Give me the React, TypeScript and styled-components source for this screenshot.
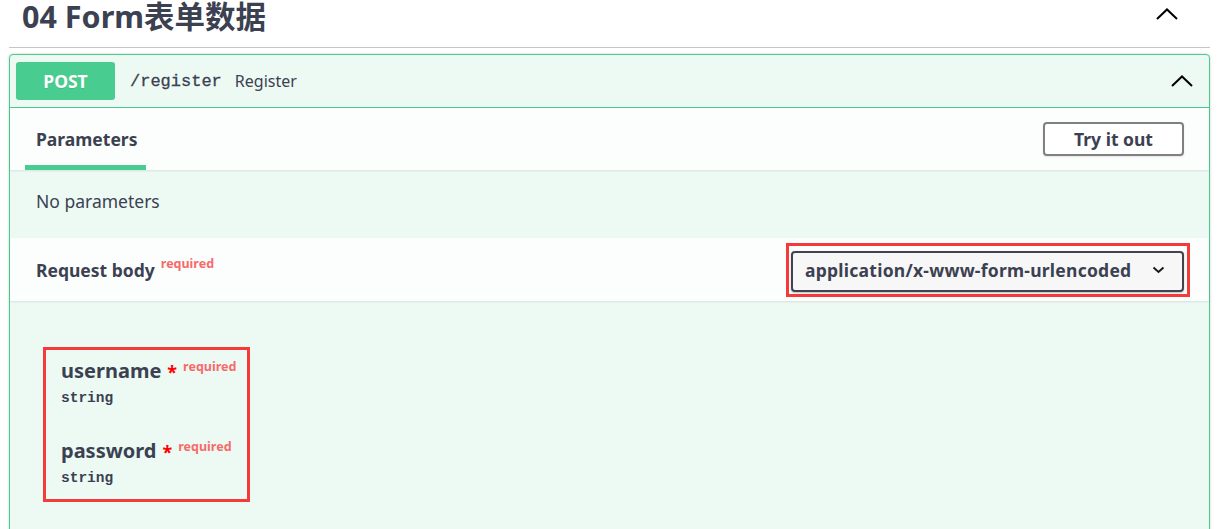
import React from "react";
import styled, { createGlobalStyle } from "styled-components";

const GlobalStyle = createGlobalStyle`
  html, body { margin: 0; padding: 0; background: #ffffff; }
  body {
    font-family: "Noto Sans", "Noto Sans CJK SC", sans-serif;
    color: #3b4151;
    overflow: hidden;
  }
`;

const Page = styled.div`
  padding: 0 10px 0 9px;
`;

const TagHeader = styled.div`
  display: flex;
  align-items: flex-start;
  justify-content: space-between;
  padding: 0 32px 15px 13px;
  border-bottom: 1px solid #c4c6cb;
`;

const TagTitle = styled.h4`
  margin: 0;
  font-size: 30.5px;
  line-height: 32px;
  font-weight: 700;
  color: #3b4151;
`;

const ChevronButton = styled.button<{ $top?: number }>`
  border: none;
  background: transparent;
  padding: 0;
  margin-top: ${(p) => p.$top ?? 0}px;
  display: flex;
  align-items: center;
  cursor: pointer;
`;

const Opblock = styled.div`
  margin-top: 6px;
  border: 1px solid #49cc90;
  border-radius: 4px;
  background: #edfaf4;
  box-shadow: 0 0 3px rgba(0, 0, 0, 0.19);
`;

const Summary = styled.div`
  display: flex;
  align-items: center;
  padding: 7px 16px 7px 6px;
  border-bottom: 1px solid #49cc90;
`;

const MethodBadge = styled.span`
  width: 99px;
  height: 38px;
  border-radius: 3px;
  background: #49cc90;
  color: #ffffff;
  font-weight: 700;
  font-size: 17.5px;
  display: flex;
  align-items: center;
  justify-content: center;
  text-shadow: 0 1px 0 rgba(0, 0, 0, 0.1);
`;

const Path = styled.span`
  margin-left: 15px;
  font-family: "Liberation Mono", monospace;
  font-size: 17px;
  color: #3b4151;
  -webkit-text-stroke: 0.3px #3b4151;
`;

const Description = styled.span`
  margin-left: 13px;
  font-size: 16px;
  color: #3b4151;
  flex: 1;
`;

const SectionHeader = styled.div<{ $height: number; $right: number }>`
  display: flex;
  align-items: center;
  justify-content: space-between;
  height: ${(p) => p.$height}px;
  padding: 0 ${(p) => p.$right}px 0 15px;
  background: #fbfefd;
  box-shadow: 0 1px 2px rgba(0, 0, 0, 0.1);
  position: relative;
`;

const Tab = styled.div`
  align-self: stretch;
  display: flex;
  align-items: center;
  padding: 0 9px 0 11px;
  font-size: 17.5px;
  font-weight: 700;
  box-shadow: inset 0 -5px 0 #49cc90;
`;

const TryButton = styled.button`
  width: 141px;
  height: 34px;
  border: 2px solid #808080;
  border-radius: 4px;
  background: #ffffff;
  color: #3b4151;
  font-family: inherit;
  font-size: 17.5px;
  font-weight: 700;
  box-shadow: 0 1px 2px rgba(0, 0, 0, 0.1);
  cursor: pointer;
`;

const NoParams = styled.div`
  height: 68px;
  box-sizing: border-box;
  display: flex;
  align-items: center;
  padding: 0 0 6px 26px;
  font-size: 17.5px;
`;

const BodyTitle = styled.div`
  padding-left: 11px;
  font-size: 17.5px;
  font-weight: 700;
  display: flex;
  align-items: flex-start;
`;

const RequiredSup = styled.span<{ $top: number }>`
  font-size: 12.5px;
  font-weight: 700;
  color: #f76a6a;
  margin-left: 6px;
  position: relative;
  top: ${(p) => p.$top}px;
`;

const Annotation = styled.div<{ $pad: string }>`
  border: 3px solid #f53a3a;
  padding: ${(p) => p.$pad};
`;

const SelectBox = styled.div`
  width: 393px;
  height: 41px;
  box-sizing: border-box;
  border: 2px solid #41444e;
  border-radius: 4px;
  background: #f7f7f7;
  box-shadow: 0 1px 2px rgba(0, 0, 0, 0.25);
  display: flex;
  align-items: center;
  justify-content: space-between;
  padding: 0 17px 3px 12px;
  font-size: 17.5px;
  letter-spacing: 0.25px;
  font-weight: 700;
  color: #3b4151;
`;

const BodyContent = styled.div`
  padding: 46px 0 40px 33px;
`;

const ParamBox = styled(Annotation)`
  width: 207px;
  box-sizing: border-box;
`;

const Param = styled.div<{ $gap: number }>`
  margin-top: ${(p) => p.$gap}px;
`;

const ParamName = styled.div`
  display: flex;
  align-items: flex-start;
  font-size: 20px;
  line-height: 24px;
  font-weight: 700;
`;

const Asterisk = styled.span`
  color: #ff0000;
  font-size: 18px;
  margin-left: 6px;
  position: relative;
  top: 1px;
`;

const ParamType = styled.div`
  margin-top: 6px;
  font-family: "Liberation Mono", monospace;
  font-size: 14.5px;
  line-height: 18px;
  font-weight: 700;
  color: #3b4151;
`;

const ChevronUp = ({ w = 22, h = 12 }: { w?: number; h?: number }) => (
  <svg width={w} height={h} viewBox="0 0 22 12" fill="none">
    <polyline points="1,11 11,1.5 21,11" stroke="#000" strokeWidth="2" />
  </svg>
);

const ChevronDown = () => (
  <svg width="13" height="8" viewBox="0 0 13 8" fill="none">
    <polyline points="1.5,1.5 6.5,6 11.5,1.5" stroke="#1b1b1b" strokeWidth="2" />
  </svg>
);

const params = [
  { name: "username", type: "string" },
  { name: "password", type: "string" },
];

export default function App() {
  return (
    <>
      <GlobalStyle />
      <Page>
        <TagHeader>
          <TagTitle>04 Form表单数据</TagTitle>
          <ChevronButton $top={8}>
            <ChevronUp />
          </ChevronButton>
        </TagHeader>
        <Opblock>
          <Summary>
            <MethodBadge>POST</MethodBadge>
            <Path>/register</Path>
            <Description>Register</Description>
            <ChevronButton>
              <ChevronUp />
            </ChevronButton>
          </Summary>
          <SectionHeader $height={62} $right={25}>
            <Tab>Parameters</Tab>
            <TryButton>Try it out</TryButton>
          </SectionHeader>
          <NoParams>No parameters</NoParams>
          <SectionHeader $height={63} $right={19}>
            <BodyTitle>
              Request body
              <RequiredSup $top={-3}>required</RequiredSup>
            </BodyTitle>
            <Annotation $pad="5px 3px 2px 2px">
              <SelectBox>
                application/x-www-form-urlencoded
                <ChevronDown />
              </SelectBox>
            </Annotation>
          </SectionHeader>
          <BodyContent>
            <ParamBox $pad="9px 0 12px 15px">
              {params.map((p, i) => (
                <Param key={p.name} $gap={i === 0 ? 0 : 32}>
                  <ParamName>
                    {p.name}
                    <Asterisk>*</Asterisk>
                    <RequiredSup $top={-4}>required</RequiredSup>
                  </ParamName>
                  <ParamType>{p.type}</ParamType>
                </Param>
              ))}
            </ParamBox>
          </BodyContent>
        </Opblock>
      </Page>
    </>
  );
}
